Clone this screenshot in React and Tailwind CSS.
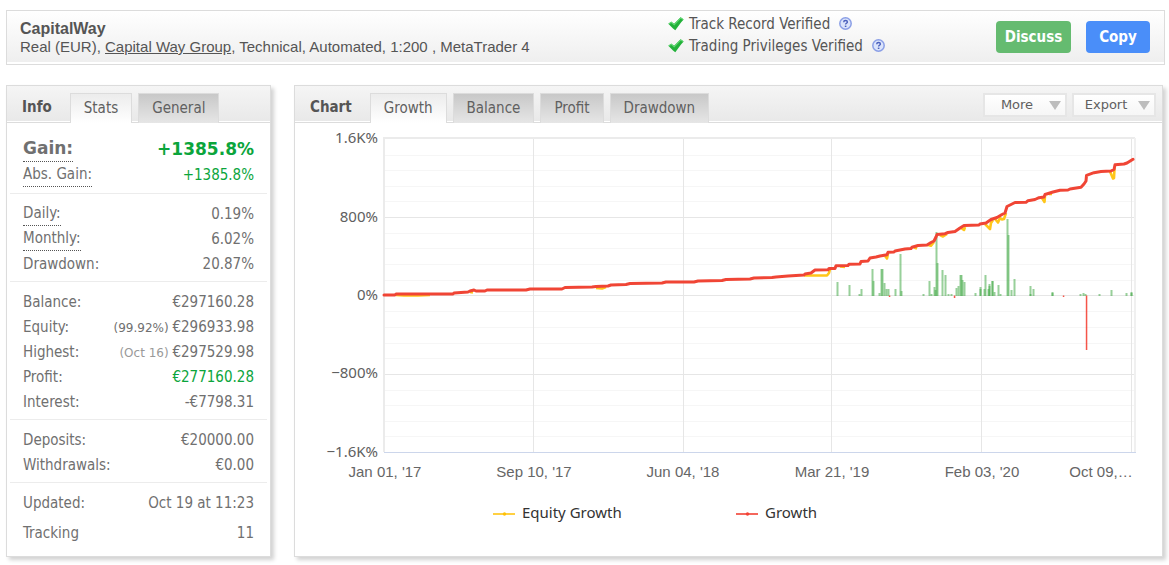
import React from "react";

const growth = [
  [384, 295], [395, 295], [396, 294], [453, 294], [454, 293], [468, 292], [470, 291], [474, 290], [476, 291],
  [485, 291], [487, 290], [526, 290], [530, 289], [562, 289], [565, 287.5], [592, 287], [596, 286.5], [608, 286],
  [611, 285], [626, 284.5], [630, 283.5], [662, 283], [666, 282], [694, 282], [698, 281], [722, 280.5],
  [726, 279.5], [750, 279], [754, 278], [772, 277.5], [776, 277], [788, 276], [804, 275], [805, 274], [811, 273],
  [815, 270], [828, 269.8], [829, 268.5], [835, 268.5], [836, 265.7], [848, 265.5], [849, 264.3], [860, 264],
  [861, 261.5], [868, 261], [870, 258], [876, 257], [880, 256], [887, 254.7], [888, 252.3], [894, 252],
  [895, 251], [900, 250], [905, 249], [911, 248.5], [912, 247.3], [918, 245.5], [927, 245], [931, 242.5],
  [934, 241], [936, 237], [937, 234.5], [945, 233.7], [948, 232.5], [955, 231.5], [960, 228], [964, 225.5],
  [979, 225], [980, 224], [986, 223], [991, 219.5], [997, 217.5], [1002, 214.5], [1005, 213], [1007, 206.5],
  [1010, 205], [1015, 202.5], [1026, 202.3], [1028, 200.7], [1035, 199.5], [1039, 197.7], [1044, 197],
  [1045, 194.5], [1053, 192], [1060, 190.3], [1068, 190], [1070, 189], [1081, 187.3], [1084, 184], [1086, 181],
  [1086.5, 175.3], [1094, 172.7], [1101, 171.5], [1111, 171], [1114, 169.5], [1115, 164.7], [1124, 164],
  [1127, 163], [1131, 160.5], [1133, 159.3],
];

const equityDips = [
  [[396, 295], [404, 295.5], [418, 295.5], [430, 295]],
  [[470, 292], [473, 292.5]],
  [[596, 288], [602, 288.5], [606, 287]],
  [[804, 275.5], [812, 275.5], [827, 275.5], [829, 273], [830, 269]],
  [[840, 266.5], [845, 267]],
  [[885, 256], [887, 258.5], [888, 254]],
  [[914, 247.5], [917, 248.5]],
  [[928, 245], [931, 245.8], [934, 242]],
  [[940, 235], [943, 236.5], [947, 234]],
  [[961, 228], [964, 230], [965, 227]],
  [[985, 224], [988, 227], [990, 229], [991, 223], [993, 220]],
  [[995, 219], [998, 222.5], [1000, 218], [1002, 219.5], [1004, 219], [1006, 213]],
  [[1042, 198], [1044.5, 202], [1045, 196]],
  [[1049, 194], [1052, 194]],
  [[1110, 171.5], [1113, 178.5], [1114, 178], [1114.5, 168]],
];

const gains = [
  [837, 282], [849, 285], [859, 294], [861, 289], [872, 269], [873, 281], [879, 293], [881, 269], [882, 269],
  [884, 283], [886, 289], [888, 289], [895, 289], [900, 254], [901, 291], [923, 294], [929, 281], [931, 294],
  [934, 287], [935, 290], [936, 232], [937, 263], [942, 270], [945, 275], [948, 294], [951, 294], [956, 288],
  [958, 286], [960, 275], [961, 275], [962, 280], [964, 282], [975, 293], [980, 287], [980, 289], [984, 289],
  [985, 275], [988, 289], [989, 284], [989, 286], [992, 281], [992, 281], [994, 292], [998, 285], [1000, 294],
  [1007, 219], [1008, 235], [1011, 290], [1014, 279], [1030, 286], [1030, 294], [1033, 289], [1052, 292],
  [1052, 293], [1080, 294], [1083, 293], [1085, 294], [1099, 294], [1111, 290], [1126, 293], [1131, 292],
  [1131, 293],
];

const losses = [[889, 297], [954, 298], [1063, 297], [1086, 350]];

const minorLines = [155, 170, 186, 201, 233, 248, 264, 280, 311, 327, 343, 358, 390, 405, 421, 436];
const majorLines = [138, 217, 295, 374];
const dateLines = [533, 683, 831, 981, 1131];

const yLabels = [["1.6K%", 143], ["800%", 222], ["0%", 300], ["−800%", 378], ["−1.6K%", 457]];
const xLabels = [
  ["Jan 01, '17", 385], ["Sep 10, '17", 534], ["Jun 04, '18", 683],
  ["Mar 21, '19", 832], ["Feb 03, '20", 982], ["Oct 09,…", 1101],
];

const toPoints = (pts) => pts.map((p) => p.join(",")).join(" ");

function GrowthChart() {
  return (
    <svg viewBox="295 123 867 433" className="block h-auto w-full" role="img" aria-label="Growth chart">
      <g shapeRendering="crispEdges">
        {minorLines.map((y) => <rect key={y} x="384" y={y} width="751" height="1" fill="#f6f6f6" />)}
        {majorLines.map((y) => <rect key={y} x="384" y={y} width="751" height="1" fill="#e6e6e6" />)}
        {dateLines.map((x) => <rect key={x} x={x} y="138" width="1" height="314" fill="#e6e6e6" />)}
        <rect x="383" y="138" width="2" height="314" fill="#ebebeb" />
        <rect x="383" y="137" width="752" height="2" fill="#ebebeb" />
        <rect x="1134" y="138" width="2" height="314" fill="#f0f0f0" />
        <rect x="384" y="452" width="752" height="1" fill="#ccd6eb" />
      </g>
      {gains.map(([x, y], i) => (
        <rect key={i} x={x - 0.5} y={y} width="2" height={296 - y} fill="#43a947" fillOpacity="0.55" />
      ))}
      {losses.map(([x, y], i) => (
        <rect key={i} x={x - 0.2} y="295.5" width="1.5" height={y - 295.5} fill="#f44336" fillOpacity="0.9" />
      ))}
      {equityDips.map((d, i) => (
        <polyline key={i} points={toPoints(d)} fill="none" stroke="#ffc61a" strokeWidth="2.6" strokeLinejoin="round" />
      ))}
      <polyline
        points={toPoints(growth)} fill="none" stroke="#f04535" strokeWidth="3"
        strokeLinejoin="round" strokeLinecap="round"
      />
      <g className="font-['Noto_Sans',sans-serif] text-[15px]" fill="#606060" textAnchor="end">
        {yLabels.map(([t, y]) => <text key={t} x="378" y={y}>{t}</text>)}
      </g>
      <g className="font-['Liberation_Sans',Arial,sans-serif] text-[15px]" fill="#666666" textAnchor="middle">
        {xLabels.map(([t, x]) => <text key={t} x={x} y="477">{t}</text>)}
      </g>
      <path d="M493 514H515" stroke="#ffd042" strokeWidth="2" />
      <circle cx="504.500" cy="514" r="1.7" fill="#ffc107" />
      <path d="M736 514H758" stroke="#f4675c" strokeWidth="2" />
      <circle cx="747.500" cy="514" r="1.7" fill="#f44336" />
      <g className="font-['Noto_Sans',sans-serif] text-[15px]" fill="#333333">
        <text x="522" y="518">Equity Growth</text>
        <text x="765" y="518">Growth</text>
      </g>
    </svg>
  );
}

function Check() {
  return (
    <svg viewBox="0 0 16 14" className="h-3.5 w-4" aria-hidden="true">
      <path d="M0.300 6.800 3.200 4.800 6.100 6.700 12.600 0.200 15.700 2.600 13.200 5.200 7.300 13.300 5 11.600Z" fill="#22b13a" />
      <path d="M0.800 6.900 3.300 5.300 6.200 7.800 12.700 0.900 14.800 2.500" fill="none" stroke="#62d873" strokeWidth="1.100" />
    </svg>
  );
}

function Help({ label }) {
  return (
    <button type="button" aria-label={label} className="ml-1 h-[13px] w-[13px]">
      <svg viewBox="0 0 13 13" className="block h-full w-full" aria-hidden="true">
        <circle cx="6.500" cy="6.500" r="5.700" fill="#dbe4fb" stroke="#8b9fe6" strokeWidth="1.500" />
        <path d="M4.700 5.200c0-2.300 3.700-2.100 3.700-.2 0 1.300-1.800 1.200-1.800 2.500" fill="none" stroke="#4a5fbc" strokeWidth="1.400" />
        <rect x="5.800" y="8.600" width="1.600" height="1.400" fill="#4a5fbc" />
      </svg>
    </button>
  );
}

function Verified({ children }) {
  return (
    <div className="flex h-[22px] items-center gap-[5px]">
      <Check />
      <span>{children}</span>
      <Help label={`About ${children}`} />
    </div>
  );
}

function Tab({ active, children }) {
  return (
    <button
      type="button"
      role="tab"
      aria-selected={!!active}
      className={
        active
          ? "h-[30px] border border-b-0 border-[#dcdcdc] bg-linear-to-b from-[#ececec] to-white px-[13px] pb-0.5"
          : "h-[30px] border border-b-0 border-[#dcdcdc] bg-linear-to-b from-[#c8c8c8] to-[#e6e6e6] px-[13px] pb-0.5"
      }
    >
      {children}
    </button>
  );
}

function Panel({ title, tabs, actions, className, children }) {
  return (
    <section className={`border border-[#dcdcdc] bg-white shadow-[3px_3px_4px_rgba(0,0,0,0.18)] ${className}`}>
      <header className="flex h-[37px] items-end bg-linear-to-b from-[#f5f5f5] to-[#e8e8e8] text-[#606060] shadow-[inset_0_-1px_#dcdcdc,inset_0_-2px_#fff]">
        <h2 className="flex h-8 items-center pr-[18px] pb-px pl-[15px] font-bold text-[#555]">{title}</h2>
        <div role="tablist" className="flex gap-1.5">
          {tabs.map((t, i) => <Tab key={t} active={i === 0}>{t}</Tab>)}
        </div>
        {actions}
      </header>
      {children}
    </section>
  );
}

function MenuButton({ children }) {
  return (
    <button
      type="button"
      aria-haspopup="menu"
      className="flex h-6 w-21 items-center justify-between border-2 border-[#e6e6e6] bg-linear-to-b from-white to-[#f6f6f6] pr-1 pl-1 font-['DejaVu_Sans',Verdana,sans-serif] text-[13px] text-[#606060]"
    >
      <span className="flex-1 text-center">{children}</span>
      <svg viewBox="0 0 12 9" className="ml-1 h-[9px] w-3" aria-hidden="true">
        <path d="M0 0H12L6 9Z" fill="#bdbdbd" />
      </svg>
    </button>
  );
}

function Row({ label, hint, note, noteClass = "", green, children }) {
  return (
    <div className="flex h-[25px] items-center justify-between">
      <dt className={hint ? "flex h-full items-center border-b border-dotted border-[#555]" : ""}>{label}</dt>
      <dd className={green ? "text-[#0ba53c]" : ""}>
        {note && <span className={`font-['DejaVu_Sans',Verdana,sans-serif] text-xs ${noteClass}`}>{note} </span>}
        {children}
      </dd>
    </div>
  );
}

const group = "mx-[3px] border-b border-[#ececec] px-[13px] pt-[7px] pb-[5px]";

export default function App() {
  return (
    <main className="bg-white pt-2.5 pr-1 pb-2 pl-1.5 font-['DejaVu_Sans_Condensed','DejaVu_Sans',Tahoma,sans-serif] text-[15px] leading-5 text-[#555]">
      <header className="flex h-[55px] items-center border border-[#dcdcdc] bg-linear-to-b from-white to-[#eeeeee] pr-3.5 pl-[13px] shadow-[inset_0_-2px_#fff]">
        <div className="w-[648px] font-['Liberation_Sans',Arial,sans-serif] leading-[17px]">
          <h1 className="text-base leading-[18px] font-bold">CapitalWay</h1>
          <p>
            Real (EUR), <a href="#group" className="underline">Capital Way Group</a>, Technical, Automated, 1:200 , MetaTrader 4
          </p>
        </div>
        <div className="mb-1.5 flex-1">
          <Verified>Track Record Verified</Verified>
          <Verified>Trading Privileges Verified</Verified>
        </div>
        <div className="mb-0.5 flex gap-[15px] font-bold text-white">
          <button type="button" className="h-8 w-[75px] rounded bg-[#65bb70]">Discuss</button>
          <button type="button" className="h-8 w-16 rounded bg-[#4a8ef9]">Copy</button>
        </div>
      </header>

      <div className="mt-5 flex gap-[23px] pr-0.5">
        <Panel title="Info" tabs={["Stats", "General"]} className="w-[265px] shrink-0">
          <dl className="pb-[11px] text-[#707070]">
            <div className="mx-[3px] border-b border-[#ececec] px-[13px] pt-3 pb-1.5">
              <div className="flex h-[27px] items-center justify-between font-['DejaVu_Sans',Verdana,sans-serif] text-[17px] font-bold">
                <dt className="flex h-full items-center border-b border-dotted border-[#555]">Gain:</dt>
                <dd className="text-[#0ba53c]">+1385.8%</dd>
              </div>
              <Row label="Abs. Gain:" hint green>+1385.8%</Row>
            </div>
            <div className={group}>
              <Row label="Daily:" hint>0.19%</Row>
              <Row label="Monthly:" hint>6.02%</Row>
              <Row label="Drawdown:">20.87%</Row>
            </div>
            <div className={group}>
              <Row label="Balance:">€297160.28</Row>
              <Row label="Equity:" note="(99.92%)">€296933.98</Row>
              <Row label="Highest:" note="(Oct 16)" noteClass="text-[#999]">€297529.98</Row>
              <Row label="Profit:" green>€277160.28</Row>
              <Row label="Interest:">-€7798.31</Row>
            </div>
            <div className={group}>
              <Row label="Deposits:">€20000.00</Row>
              <Row label="Withdrawals:">€0.00</Row>
            </div>
            <div className="mx-[3px] flex flex-col gap-[5px] px-[13px] pt-[7px]">
              <Row label="Updated:">Oct 19 at 11:23</Row>
              <Row label="Tracking">11</Row>
            </div>
          </dl>
        </Panel>

        <Panel
          title="Chart"
          tabs={["Growth", "Balance", "Profit", "Drawdown"]}
          className="min-w-0 flex-1"
          actions={
            <div className="mr-1.5 mb-1.5 ml-auto flex gap-[5px]">
              <MenuButton>More</MenuButton>
              <MenuButton>Export</MenuButton>
            </div>
          }
        >
          <GrowthChart />
        </Panel>
      </div>
    </main>
  );
}
